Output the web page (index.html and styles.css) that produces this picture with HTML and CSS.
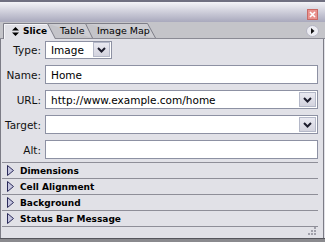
FILE: index.html
```html
<!DOCTYPE html>
<html lang="en">
<head>
    <meta charset="UTF-8" />
    <title>Property Inspector – Slice</title>
    <link rel="stylesheet" href="styles.css">
</head>
<body>

<div class="panel">
    <div class="titlebar">
        <span class="close-btn">
            <svg width="11" height="11" viewBox="0 0 11 11"><rect x="0.5" y="0.5" width="10" height="10" fill="#e9928e" stroke="#c96a66"/><path d="M3 3 L8 8 M8 3 L3 8" stroke="#fff" stroke-width="1.6"/></svg>
        </span>
    </div>

    <div class="tabstrip">
        <div class="tabs">
            <div class="tab tab-slice active">
                <svg class="tab-shape" width="53" height="16" viewBox="0 0 53 16"><path d="M0.5 16 V0.5 H44.5 L52.5 16" fill="#e1e1e7" stroke="#7e7e88"/><path d="M1.5 16 V1.5 H44" fill="none" stroke="#f4f4f8"/></svg>
                <span class="tab-label">
                    <svg width="7" height="9" viewBox="0 0 7 9"><path d="M3.5 0 L7 3.5 H0 Z M3.5 9 L7 5.5 H0 Z" fill="#000"/></svg>
                    Slice
                </span>
            </div>
            <div class="tab tab-table">
                <svg class="tab-shape" width="46" height="15" viewBox="0 0 46 15"><path d="M0 0.5 H38.5 L45.5 15" fill="#cdcdd2" stroke="#7e7e88"/></svg>
                <span class="tab-label">Table</span>
            </div>
            <div class="tab tab-map">
                <svg class="tab-shape" width="71" height="15" viewBox="0 0 71 15"><path d="M0 0.5 H62.5 L70.5 15" fill="#cdcdd2" stroke="#7e7e88"/></svg>
                <span class="tab-label">Image Map</span>
            </div>
        </div>
        <span class="menu-btn">
            <svg width="13" height="12" viewBox="0 0 13 12"><ellipse cx="6.5" cy="6" rx="6" ry="5.5" fill="#ececf2" stroke="#b4b4c2"/><path d="M5 3 L8.5 6 L5 9 Z" fill="#111"/></svg>
        </span>
    </div>

    <div class="content">
        <div class="form">
            <label>Type:</label>
            <div class="field">
                <div class="combo combo-type">
                    <span class="combo-value">Image</span>
                    <span class="drop-btn"><svg width="9" height="6" viewBox="0 0 9 6"><path d="M1 1 L4.5 4.5 L8 1" fill="none" stroke="#1c1c2c" stroke-width="2"/></svg></span>
                </div>
            </div>

            <label>Name:</label>
            <div class="field"><div class="input">Home</div></div>

            <label>URL:</label>
            <div class="field">
                <div class="combo">
                    <span class="combo-value">http://www.example.com/home</span>
                    <span class="drop-btn"><svg width="9" height="6" viewBox="0 0 9 6"><path d="M1 1 L4.5 4.5 L8 1" fill="none" stroke="#1c1c2c" stroke-width="2"/></svg></span>
                </div>
            </div>

            <label>Target:</label>
            <div class="field">
                <div class="combo">
                    <span class="combo-value"></span>
                    <span class="drop-btn"><svg width="9" height="6" viewBox="0 0 9 6"><path d="M1 1 L4.5 4.5 L8 1" fill="none" stroke="#1c1c2c" stroke-width="2"/></svg></span>
                </div>
            </div>

            <label>Alt:</label>
            <div class="field"><div class="input"></div></div>
        </div>

        <div class="sections">
            <div class="section">
                <svg class="twisty" width="7" height="11" viewBox="0 0 7 11"><path d="M0.5 0.5 L6.5 5.5 L0.5 10.5 Z" fill="#c6c6e0" stroke="#2a2a5a"/></svg>
                Dimensions
            </div>
            <div class="section">
                <svg class="twisty" width="7" height="11" viewBox="0 0 7 11"><path d="M0.5 0.5 L6.5 5.5 L0.5 10.5 Z" fill="#c6c6e0" stroke="#2a2a5a"/></svg>
                Cell Alignment
            </div>
            <div class="section">
                <svg class="twisty" width="7" height="11" viewBox="0 0 7 11"><path d="M0.5 0.5 L6.5 5.5 L0.5 10.5 Z" fill="#c6c6e0" stroke="#2a2a5a"/></svg>
                Background
            </div>
            <div class="section">
                <svg class="twisty" width="7" height="11" viewBox="0 0 7 11"><path d="M0.5 0.5 L6.5 5.5 L0.5 10.5 Z" fill="#c6c6e0" stroke="#2a2a5a"/></svg>
                Status Bar Message
            </div>
        </div>

        <div class="footer">
            <svg class="grip" width="9" height="9" viewBox="0 0 9 9">
                <rect x="6" y="0" width="2" height="2" fill="#a0a0aa"/>
                <rect x="3" y="3" width="2" height="2" fill="#a0a0aa"/>
                <rect x="6" y="3" width="2" height="2" fill="#a0a0aa"/>
                <rect x="0" y="6" width="2" height="2" fill="#a0a0aa"/>
                <rect x="3" y="6" width="2" height="2" fill="#a0a0aa"/>
                <rect x="6" y="6" width="2" height="2" fill="#a0a0aa"/>
            </svg>
        </div>
    </div>

    <div class="bottom-bar"></div>
</div>

</body>
</html>
```

FILE: styles.css
```css
body, html {
    margin: 0;
    padding: 0;
    font-family: 'DejaVu Sans', Verdana, sans-serif;
    font-size: 10.5px;
    color: #000;
    background: #e1e1e7;
}

.panel {
    width: 325px;
    height: 242px;
    display: flex;
    flex-direction: column;
    background: #e1e1e7;
}

/* title bar */
.titlebar {
    height: 20px;
    border-top: 2px solid #6f6f80;
    background: linear-gradient(180deg, #f3f3f7, #a9a9bd);
    display: flex;
    justify-content: flex-end;
    align-items: flex-end;
    padding-right: 7px;
}

.close-btn {
    display: flex;
    margin-bottom: 2px;
}

/* tabs */
.tabstrip {
    height: 15px;
    padding-top: 1px;
    background: #c4c4c9;
    border-bottom: 1px solid #8a8a94;
    display: flex;
    justify-content: space-between;
    align-items: flex-end;
    padding-left: 3px;
    padding-right: 6px;
}

.tabs {
    display: flex;
    align-items: flex-start;
    height: 15px;
}

.tab {
    position: relative;
    height: 15px;
    display: flex;
    align-items: center;
    font-size: 9.5px;
}

.tab-shape {
    position: absolute;
    left: 0;
    top: 0;
}

.tab-label {
    position: relative;
    display: flex;
    align-items: center;
    gap: 4px;
    line-height: 1;
}

.tab-slice {
    width: 53px;
    height: 16px;
    z-index: 3;
}

.tab-slice .tab-label {
    padding-left: 9px;
    font-weight: bold;
    font-size: 9px;
    padding-top: 1px;
}

.tab-table {
    width: 46px;
    margin-left: -9px;
    z-index: 2;
}

.tab-table .tab-label {
    padding-left: 13px;
}

.tab-map {
    width: 71px;
    margin-left: -8px;
    z-index: 1;
}

.tab-map .tab-label {
    padding-left: 12px;
}

.menu-btn {
    display: flex;
    margin-bottom: 1px;
}

/* content */
.content {
    flex: 1;
    display: flex;
    flex-direction: column;
    border-left: 1px solid #7c7c86;
    border-right: 1px solid #7c7c86;
    margin-right: 1px;
}

.form {
    display: grid;
    grid-template-columns: 37px 1fr;
    grid-auto-rows: 19px;
    column-gap: 4px;
    row-gap: 6px;
    padding: 1px 5px 0 3px;
}

.form label {
    text-align: right;
    align-self: center;
    color: #111;
}

.field {
    display: flex;
    align-items: center;
}

.input, .combo {
    box-sizing: border-box;
    height: 19px;
    width: 100%;
    background: #fff;
    border: 1px solid #8d91a3;
    display: flex;
    align-items: center;
    padding-left: 5px;
}

.combo {
    padding-right: 1px;
}

.combo-value {
    flex: 1;
}

.combo-type {
    width: 67px;
    height: 18px;
}

.drop-btn {
    box-sizing: border-box;
    width: 17px;
    height: 15px;
    background: linear-gradient(180deg, #e9e9f1, #d3d3de);
    border: 1px solid #b4b8c8;
    display: flex;
    align-items: center;
    justify-content: center;
}

/* collapsible sections */
.sections {
    margin: 3px 5px 0 1px;
    border-bottom: 1px solid #8e8e98;
}

.section {
    height: 15px;
    border-top: 1px solid #8e8e98;
    display: flex;
    align-items: center;
    gap: 6px;
    padding-left: 5px;
    font-weight: bold;
    font-size: 9px;
}

.footer {
    flex: 1;
    display: flex;
    justify-content: flex-end;
    align-items: flex-end;
    padding: 0 6px 2px 0;
}

.bottom-bar {
    height: 3px;
    border-top: 1px solid #55555c;
    background: #8a8a8e;
}
```
